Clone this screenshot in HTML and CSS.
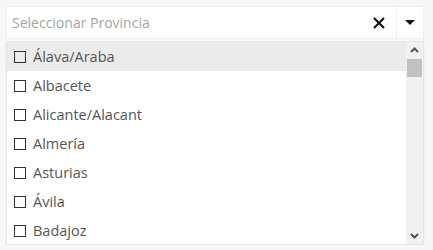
FILE: index.html
```html
<!DOCTYPE html>
<html lang="es">
<head>
  <meta charset="UTF-8">
  <title>Provincia</title>
  <link rel="stylesheet" href="styles.css">
</head>
<body>
  <div class="select">
    <div class="select-box">
      <span class="placeholder">Seleccionar Provincia</span>
      <span class="clear">
        <svg width="14" height="14" viewBox="0 0 14 14"><path d="M2 2L12 12M12 2L2 12" stroke="#111" stroke-width="2.2"/></svg>
      </span>
      <span class="arrow">
        <svg width="10" height="6" viewBox="0 0 10 6"><path d="M0 0H10L5 5Z" fill="#111"/></svg>
      </span>
    </div>
    <div class="menu">
      <ul class="options">
        <li class="active"><span class="check"></span>Álava/Araba</li>
        <li><span class="check"></span>Albacete</li>
        <li><span class="check"></span>Alicante/Alacant</li>
        <li><span class="check"></span>Almería</li>
        <li><span class="check"></span>Asturias</li>
        <li><span class="check"></span>Ávila</li>
        <li><span class="check"></span>Badajoz</li>
      </ul>
      <div class="scrollbar">
        <div class="sb-btn">
          <svg width="9" height="6" viewBox="0 0 9 6"><path d="M1 5L4.5 1.5L8 5" stroke="#555" stroke-width="2" fill="none"/></svg>
        </div>
        <div class="sb-track"><div class="sb-thumb"></div></div>
        <div class="sb-btn">
          <svg width="9" height="6" viewBox="0 0 9 6"><path d="M1 1L4.5 4.5L8 1" stroke="#555" stroke-width="2" fill="none"/></svg>
        </div>
      </div>
    </div>
  </div>
</body>
</html>
```

FILE: styles.css
```css
body {
  margin: 0;
  background: #f7f7f7;
  font-family: "Open Sans", Arial, sans-serif;
  font-size: 14px;
  color: #555;
}
.select {
  padding: 6px 9px 0 6px;
}
.select-box {
  display: flex;
  align-items: center;
  height: 31px;
  background: #fff;
  border: 1px solid #f0f0f0;
}
.placeholder {
  flex: 1;
  padding-left: 5px;
  color: #a5a5a5;
}
.clear {
  width: 28px;
  display: flex;
  justify-content: center;
  padding-right: 3px;
}
.arrow {
  width: 26px;
  height: 100%;
  display: flex;
  align-items: center;
  justify-content: center;
  border-left: 1px solid #f0f0f0;
}
.menu {
  display: flex;
  margin-top: 2px;
  height: 202px;
  background: #fff;
  border: 1px solid #e6e6e6;
  box-shadow: 0 1px 2px rgba(0,0,0,0.05);
}
.options {
  flex: 1;
  list-style: none;
  margin: 0;
  padding: 0;
  font-size: 14.5px;
}
.options li {
  display: flex;
  align-items: center;
  height: 29px;
  padding-left: 7px;
}
.options li.active {
  background: #ebebeb;
}
.check {
  width: 10px;
  height: 10px;
  border: 1.5px solid #333;
  margin-right: 7px;
}
.scrollbar {
  width: 17px;
  display: flex;
  flex-direction: column;
  background: #f1f1f1;
}
.sb-btn {
  height: 16px;
  display: flex;
  align-items: center;
  justify-content: center;
}
.sb-track {
  flex: 1;
}
.sb-thumb {
  margin: 1px 1px 0;
  height: 18px;
  background: #c1c1c1;
}
```
